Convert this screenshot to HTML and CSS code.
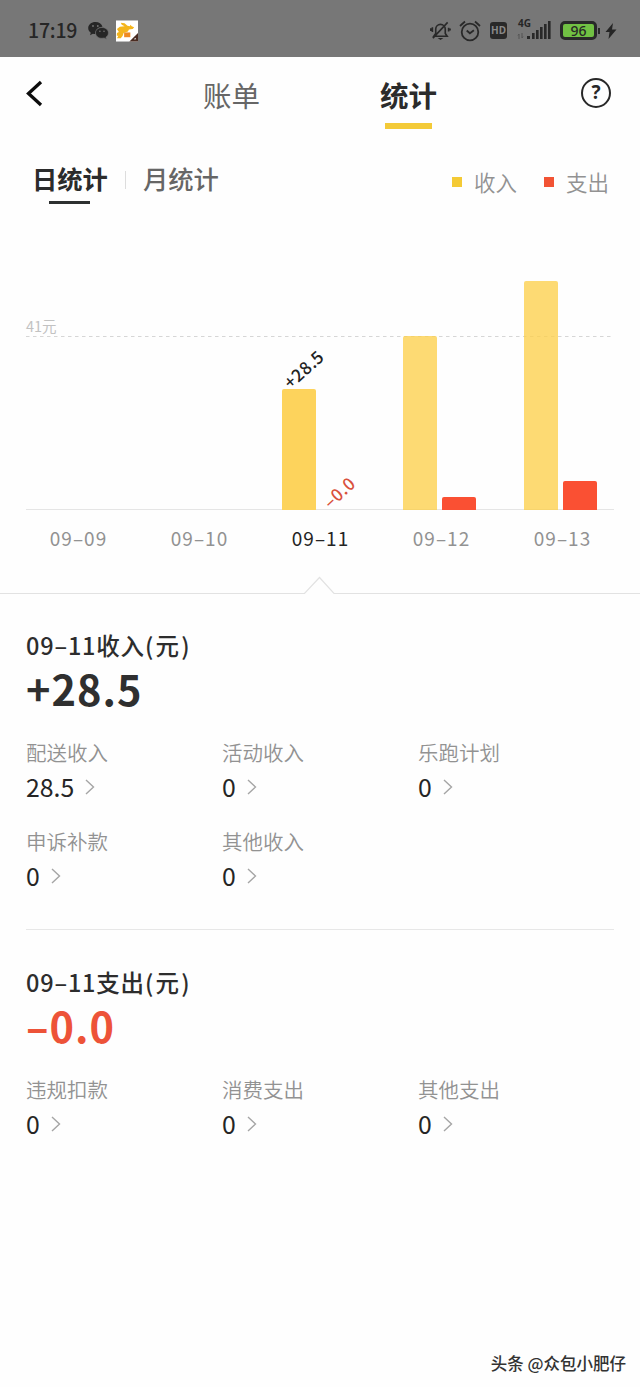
FILE: index.html
```html
<!DOCTYPE html>
<html lang="zh-CN">
<head>
<meta charset="utf-8">
<title>统计</title>
<link rel="stylesheet" href="styles.css">
</head>
<body>
<div class="status">
  <span class="clock">17:19</span>
  <svg class="wechat" width="21" height="18" viewBox="0 0 21 18"><path fill="#262626" d="M7.500 0C3.300 0 .2 2.700.2 6c0 2 1 3.600 2.600 4.700L2 13.300l2.900-1.500c.8.200 1.600.3 2.500.3C7.200 7.900 10 5 14.500 4.800 13.700 2 10.900 0 7.500 0z"/><path fill="#262626" stroke="#777" stroke-width=".6" d="M14 5.500c-3.700 0-6.500 2.400-6.500 5.400s2.800 5.400 6.500 5.400c.8 0 1.500-.1 2.200-.3l2.300 1.300-.6-2.100c1.500-1 2.500-2.500 2.500-4.300 0-3-2.800-5.400-6.400-5.400z"/><g fill="#777"><circle cx="5" cy="4" r=".9"/><circle cx="9.800" cy="4" r=".9"/><circle cx="11.900" cy="9.300" r=".8"/><circle cx="16" cy="9.300" r=".8"/></g></svg>
  <svg class="app" width="22" height="22" viewBox="0 0 23 22"><path fill="#fff" d="M0 0h23v22H0z"/><path fill="#f4b51d" d="M5 2.500l4 .5 3 2.500 2.500.5L15 4.500l1.500 1.500 2.500 1-1.500 2-4 .5-1 2L8 13l-1 3-2 2.500H1L2.500 16H.8L1 13l2-1-2-3 3-2.500 5-.5-3-1.500z"/><path fill="#ef8a22" d="M8.500 12.500h6.500v5H8.500z"/><path fill="#4a2c22" d="M23 13v9h-9z"/><path fill="#ddd" d="M19 19l1.500-1 .5 1.500-2 .5z"/></svg>
  <span class="spacer"></span>
  <svg class="bell" width="21" height="22" viewBox="0 0 22 22" fill="none" stroke="#292929" stroke-width="1.700"><path d="M4 16.500l2-3V9a5 5 0 0 1 10 0v4.500l2 3zM3 18.500L18.500 2M2.500 7v5M.8 8v3M19.500 7.500v4M21 8.500v2"/><path fill="#292929" stroke="none" d="M8 18.300h6l-3 2.200z"/></svg>
  <svg class="alarm" width="22" height="22" viewBox="0 0 22 22" fill="none" stroke="#292929" stroke-width="1.800"><circle cx="11" cy="12" r="8.300"/><path d="M7.700 10.500l3.200 2.800 4-3M1 6l5-4.500M21 6l-5-4.500"/></svg>
  <span class="hd">HD</span>
  <span class="network">
    <span class="generation">4G</span>
    <svg width="34" height="19" viewBox="0 0 34 19"><g fill="#292929"><path d="M10 15h3v3h-3zM15 12h2.600v6H15zM19 9h2.600v9H19zM23 6h2.600v12H23zM27 3h2.600v15H27zM31 0h2.600v18H31z"/></g><path d="M2 18v-5l-1 1.500M5 12v5l1-1.500" fill="none" stroke="#555" stroke-width="1"/></svg>
  </span>
  <span class="battery">96</span><span class="terminal"></span>
  <svg class="bolt" width="12" height="18" viewBox="0 0 12 18"><path fill="#252525" d="M8 1L.5 10h4L3.500 17 11.500 7.500H7z"/></svg>
</div>

<header class="header">
  <svg class="back" width="18" height="28" viewBox="0 0 18 28"><path d="M15 2L2.500 13.500 15 25" fill="none" stroke="#0c0c0c" stroke-width="3.300"/></svg>
  <span class="tab">账单</span>
  <span class="tab tab-active">统计</span>
  <span class="help">?</span>
</header>

<nav class="subnav">
  <span class="period period-active">日统计</span>
  <span class="divider"></span>
  <span class="period">月统计</span>
  <span class="spacer"></span>
  <span class="legend legend-in">收入</span>
  <span class="legend legend-out">支出</span>
</nav>

<section class="chart">
  <div class="plot">
    <div class="guide"><span class="guide-label">41元</span><svg class="guide-line" width="586" height="1"><path d="M0 .5h586" stroke="#d6d6d6" stroke-dasharray="3.500 3.500"/></svg></div>
    <div class="group"></div>
    <div class="group"></div>
    <div class="group group-active"><i class="bar in" style="height:121px"></i><i class="bar out" style="height:0"></i><span class="value value-in">+28.5</span><span class="value value-out">–0.0</span></div>
    <div class="group"><i class="bar in" style="height:174px"></i><i class="bar out" style="height:13px"></i></div>
    <div class="group"><i class="bar in" style="height:229px"></i><i class="bar out" style="height:29px"></i></div>
  </div>
  <div class="axis"><span>09–09</span><span>09–10</span><span class="axis-active">09–11</span><span>09–12</span><span>09–13</span></div>
</section>
<svg class="notch" width="640" height="20" viewBox="0 0 640 20"><path d="M0 17.500h304.500L319.500 1.500l14.500 16h306" fill="none" stroke="#e2e2e2" stroke-width="1.200"/></svg>

<main class="details">
  <section class="block">
    <h2>09–11收入<span class="unit">(元)</span></h2>
    <p class="total">+28.5</p>
    <div class="items">
      <div class="item"><span class="name">配送收入</span><span class="amount">28.5<svg class="chevron" viewBox="0 0 10 16"><path d="M1 1l7.500 7L1 15"/></svg></span></div>
      <div class="item"><span class="name">活动收入</span><span class="amount">0<svg class="chevron" viewBox="0 0 10 16"><path d="M1 1l7.500 7L1 15"/></svg></span></div>
      <div class="item"><span class="name">乐跑计划</span><span class="amount">0<svg class="chevron" viewBox="0 0 10 16"><path d="M1 1l7.500 7L1 15"/></svg></span></div>
      <div class="item"><span class="name">申诉补款</span><span class="amount">0<svg class="chevron" viewBox="0 0 10 16"><path d="M1 1l7.500 7L1 15"/></svg></span></div>
      <div class="item"><span class="name">其他收入</span><span class="amount">0<svg class="chevron" viewBox="0 0 10 16"><path d="M1 1l7.500 7L1 15"/></svg></span></div>
    </div>
  </section>
  <section class="block block-out">
    <h2>09–11支出<span class="unit">(元)</span></h2>
    <p class="total total-out">–0.0</p>
    <div class="items">
      <div class="item"><span class="name">违规扣款</span><span class="amount">0<svg class="chevron" viewBox="0 0 10 16"><path d="M1 1l7.500 7L1 15"/></svg></span></div>
      <div class="item"><span class="name">消费支出</span><span class="amount">0<svg class="chevron" viewBox="0 0 10 16"><path d="M1 1l7.500 7L1 15"/></svg></span></div>
      <div class="item"><span class="name">其他支出</span><span class="amount">0<svg class="chevron" viewBox="0 0 10 16"><path d="M1 1l7.500 7L1 15"/></svg></span></div>
    </div>
  </section>
</main>
<footer class="credit">头条 @众包小肥仔</footer>
</body>
</html>
```
FILE: styles.css
```css
* { box-sizing: border-box; }
body {
  margin: 0;
  width: 640px;
  height: 1387px;
  display: flex;
  flex-direction: column;
  overflow: hidden;
  background: #fefefe;
  color: #2f2f2f;
  font-family: "Noto Sans CJK SC", sans-serif;
}
svg { display: block; flex: none; }
h2, p { margin: 0; }
.spacer { flex: 1; }

.status {
  height: 57px;
  flex: none;
  display: flex;
  align-items: center;
  padding: 4px 23px 0 28px;
  background: #777;
  color: #262626;
}
.clock { font-size: 19.500px; line-height: 24px; font-weight: 500; width: 60px; margin-top: -1px; letter-spacing: -.2px; }
.app { margin-left: 7px; }
.alarm { margin-left: 8px; }
.hd {
  width: 17px;
  height: 17px;
  margin-left: 9px;
  border-radius: 3px;
  background: #292929;
  color: #888;
  font: 700 10px/17px "Noto Sans", sans-serif;
  text-align: center;
}
.network { position: relative; width: 34px; margin-left: 10px; }
.generation { position: absolute; left: 1px; top: -4px; font: 700 10px/12px "Noto Sans", sans-serif; }
.battery {
  width: 37px;
  height: 19px;
  margin-left: 9px;
  border: 3px solid #292929;
  border-radius: 5px;
  background: #71c043;
  font: 500 14px/13px "Noto Sans", sans-serif;
  text-align: center;
}
.terminal { width: 2px; height: 6px; margin: 0 5px 0 1px; background: #292929; }

.header {
  height: 73px;
  flex: none;
  display: grid;
  grid-template-columns: 177px 58px 119px 58px 1fr 31px;
  padding: 0 28px 0 26px;
  align-items: start;
}
.back { margin-top: 23px; }
.tab { margin-top: 17px; font-size: 28.500px; line-height: 41px; color: #666; }
.tab-active {
  grid-column: 4;
  height: 55px;
  color: #2b2b2b;
  font-weight: 700;
  display: flex;
  flex-direction: column;
  justify-content: space-between;
}
.tab-active::after { content: ""; width: 47px; height: 6px; margin-left: 5px; background: #f3ca38; }
.help {
  grid-column: 6;
  width: 30px;
  height: 30px;
  margin-top: 21px;
  border: 2.400px solid #282828;
  border-radius: 50%;
  font: 700 19px/25px "Noto Sans", sans-serif;
  text-align: center;
  color: #282828;
}

.subnav { height: 90px; flex: none; display: flex; align-items: flex-start; padding: 30px 31px 0 32px; }
.period { font-size: 25.300px; line-height: 37px; font-weight: 500; color: #666; }
.period-active { color: #2b2b2b; height: 44px; display: flex; flex-direction: column; justify-content: space-between; align-items: center; font-weight: 700; }
.period-active::after { content: ""; width: 41px; height: 3px; background: #2d3030; }
.divider { width: 1px; height: 18px; margin: 11px 17px 0; background: #ddd; }
.legend { display: flex; align-items: center; gap: 12px; margin-top: 6px; font-size: 21.500px; line-height: 32px; color: #929292; font-weight: 350; }
.legend::before { content: ""; width: 10px; height: 10px; background: #f4ca35; margin-top: -1px; }
.legend-out { margin-left: 27px; }
.legend-out::before { background: #f25334; }

.chart { height: 356px; flex: none; padding: 0 26px; }
.plot {
  position: relative;
  height: 290px;
  display: grid;
  grid-template-columns: repeat(5, 121px);
  margin-left: -12px;
  width: 600px;
  align-items: end;
}
.plot::after { content: ""; position: absolute; left: 12px; right: 0; bottom: 0; height: 1px; background: #e5e5e5; z-index: -1; }
.guide { position: absolute; left: 12px; top: 96px; z-index: -1; }
.guide-label { display: block; height: 20px; font-size: 14.500px; line-height: 20px; color: #c2c2c2; }
.group { position: relative; display: flex; align-items: flex-end; gap: 5px; padding-left: 26px; }
.bar { width: 34px; border-radius: 2px 2px 0 0; }
.in { background: rgba(253, 208, 75, .78); }
.group-active .in { background: #fdd35c; }
.out { background: #fa5033; }
.value { position: absolute; font-size: 17px; line-height: 20px; font-weight: 500; white-space: nowrap; transform: rotate(-42deg); color: #222; }
.value-in { left: 24px; bottom: 131px; letter-spacing: .6px; }
.value-out { left: 65px; bottom: 8px; color: #d9513c; letter-spacing: .5px; }
.axis { display: grid; grid-template-columns: repeat(5, 121px); margin: 14px 0 0 -8px; text-align: center; font-size: 19px; line-height: 28px; letter-spacing: 1px; color: #929292; }
.axis-active { color: #242424; }
.notch { flex: none; }

.details { padding: 0 26px; }
.block { height: 334px; border-bottom: 1px solid #e7e7e7; padding-top: 32px; }
.block-out { height: 300px; border: 0; padding-top: 35px; }
h2 { font-size: 23.500px; line-height: 34px; font-weight: 500; letter-spacing: .8px; color: #2d2d2d; }
.unit { letter-spacing: 2.200px; }
.total { font-size: 41.500px; line-height: 53px; font-weight: 700; letter-spacing: 1px; }
.total-out { color: #ed5338; }
.items { display: grid; grid-template-columns: repeat(3, 196px); row-gap: 21px; margin-top: 21px; }
.item { display: flex; flex-direction: column; height: 68px; }
.name { font-size: 20.500px; line-height: 32px; font-weight: 350; color: #929292; }
.amount { display: flex; align-items: center; font-size: 24.800px; line-height: 36px; color: #252525; }
.chevron { width: 10px; height: 16px; margin: 2px 0 0 11px; fill: none; stroke: #a5a5a5; stroke-width: 1.400; }

.credit { margin: auto 14px 9px auto; font-size: 16.500px; line-height: 30px; font-weight: 500; color: #333; }
```
